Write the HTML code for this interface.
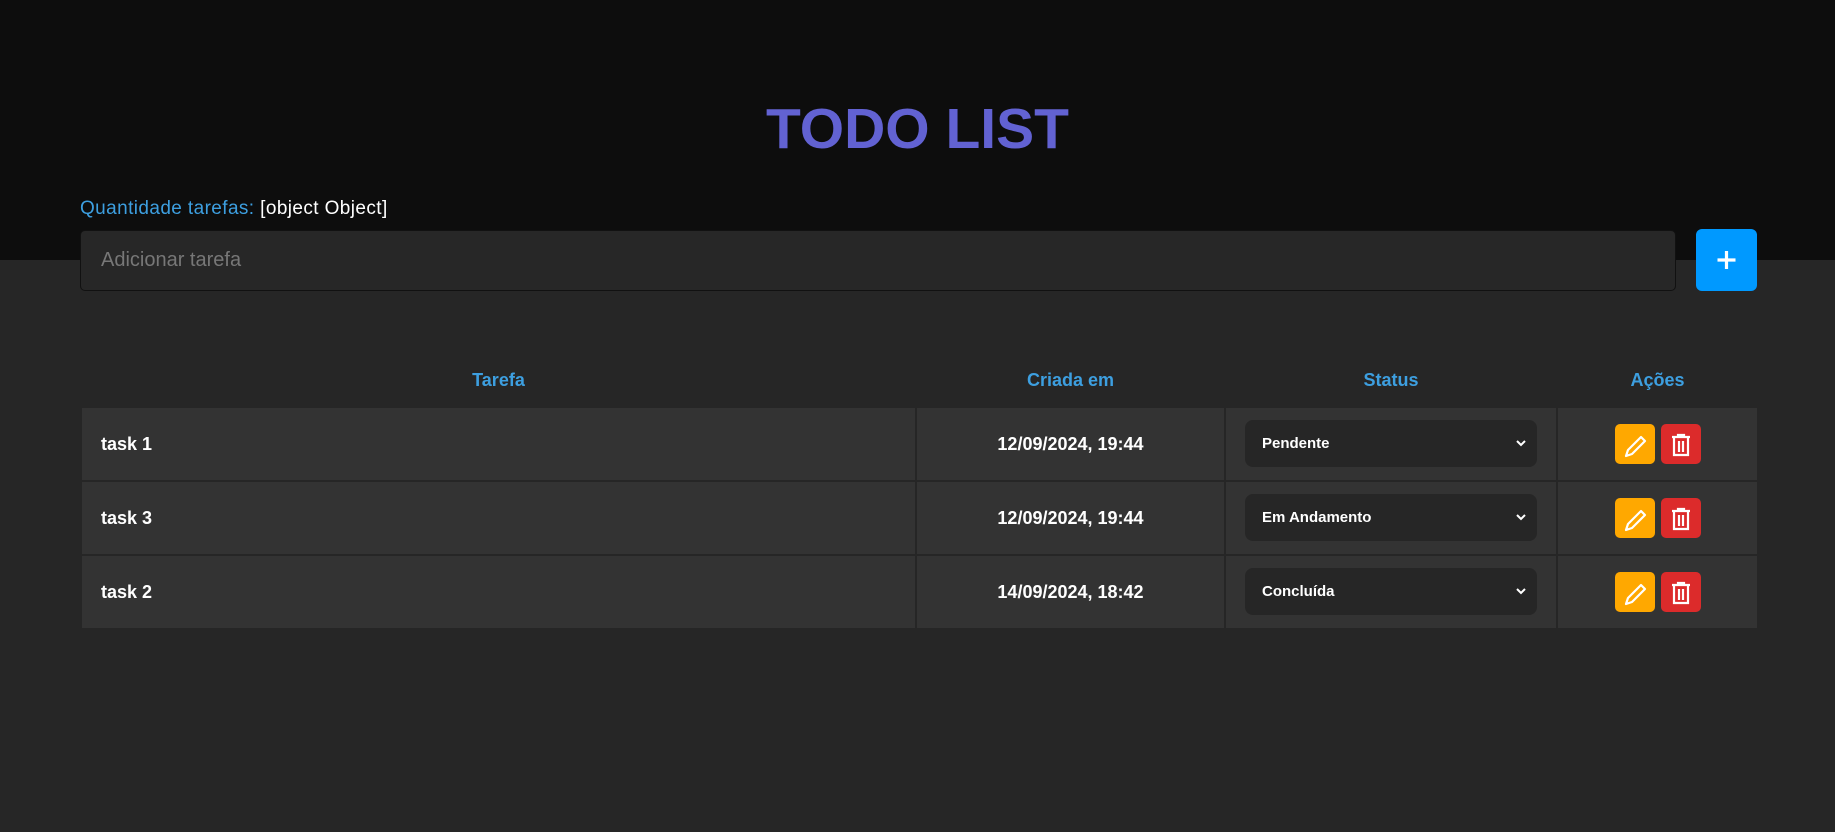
<!DOCTYPE html>
<html><head><meta charset="utf-8"><style>
*{box-sizing:border-box;margin:0;padding:0}
body{width:1835px;height:832px;background:#262626;font-family:"Liberation Sans",sans-serif;position:relative;overflow:hidden}
.hdr{position:absolute;left:0;top:0;width:1835px;height:260px;background:#0d0d0d}
h1{position:absolute;left:0;width:1835px;top:96px;text-align:center;font-size:57px;line-height:66px;color:#6262d2;font-weight:bold;letter-spacing:0px}
.q{position:absolute;left:80px;top:198px;font-size:19px;color:#3d9fe0;letter-spacing:0.4px}
.q span{color:#fff}
.inp{position:absolute;left:80px;top:230px;width:1596px;height:61px;background:#272727;border:1px solid #111;border-radius:5px;color:#777;font-size:20px;padding:18px 0 0 20px}
.add{position:absolute;left:1696px;top:229px;width:61px;height:62px;background:#0099ff;border-radius:6px}
.th{position:absolute;top:370px;font-size:18px;font-weight:bold;color:#3d9fe0;text-align:center}
.row{position:absolute;left:82px;width:1675px;height:72px}
.c{position:absolute;top:0;height:72px;background:#333;color:#fff;font-weight:bold;font-size:18px;line-height:72px}
.sel{position:absolute;left:19px;top:12px;width:292px;height:47px;background:#262626;border-radius:8px;font-size:15px;line-height:47px;padding-left:17px;font-weight:bold}
.sel svg{position:absolute;right:10px;top:19px}
.b{position:absolute;top:16px;width:40px;height:40px;border-radius:5px}
</style></head><body>
<div class="hdr"></div>
<h1>TODO LIST</h1>
<div class="q">Quantidade tarefas: <span>[object Object]</span></div>
<div class="inp">Adicionar tarefa</div>
<div class="add"><svg width="61" height="62" viewBox="0 0 61 62"><path d="M30.5 22v18M21.5 31h18" stroke="#fff" stroke-width="3.2"/></svg></div>
<div class="th" style="left:82px;width:833px">Tarefa</div>
<div class="th" style="left:917px;width:307px">Criada em</div>
<div class="th" style="left:1226px;width:330px">Status</div>
<div class="th" style="left:1558px;width:199px">Ações</div>

<div class="row" style="top:408px">
<div class="c" style="left:0;width:833px;padding-left:19px">task 1</div>
<div class="c" style="left:835px;width:307px;text-align:center">12/09/2024, 19:44</div>
<div class="c" style="left:1144px;width:330px"><div class="sel">Pendente<svg width="12" height="8" viewBox="0 0 12 8"><path d="M2 2l4 4 4-4" stroke="#fff" stroke-width="2" fill="none"/></svg></div></div>
<div class="c" style="left:1476px;width:199px">
<div class="b" style="left:57px;background:#ffa800"><svg width="40" height="40" viewBox="0 0 40 40"><path d="M11 30l2-6 13-13 4 4-13 13z" stroke="#fff" stroke-width="2.2" fill="none" stroke-linejoin="round"/></svg></div>
<div class="b" style="left:103px;background:#dc2b2b"><svg width="40" height="40" viewBox="0 0 40 40"><path d="M11 11h18M17 10v-1h6v1M13 12v17h14v-17M18 15v11M22 15v11" stroke="#fff" stroke-width="2.2" fill="none"/></svg></div>
</div></div>

<div class="row" style="top:482px">
<div class="c" style="left:0;width:833px;padding-left:19px">task 3</div>
<div class="c" style="left:835px;width:307px;text-align:center">12/09/2024, 19:44</div>
<div class="c" style="left:1144px;width:330px"><div class="sel">Em Andamento<svg width="12" height="8" viewBox="0 0 12 8"><path d="M2 2l4 4 4-4" stroke="#fff" stroke-width="2" fill="none"/></svg></div></div>
<div class="c" style="left:1476px;width:199px">
<div class="b" style="left:57px;background:#ffa800"><svg width="40" height="40" viewBox="0 0 40 40"><path d="M11 30l2-6 13-13 4 4-13 13z" stroke="#fff" stroke-width="2.2" fill="none" stroke-linejoin="round"/></svg></div>
<div class="b" style="left:103px;background:#dc2b2b"><svg width="40" height="40" viewBox="0 0 40 40"><path d="M11 11h18M17 10v-1h6v1M13 12v17h14v-17M18 15v11M22 15v11" stroke="#fff" stroke-width="2.2" fill="none"/></svg></div>
</div></div>

<div class="row" style="top:556px">
<div class="c" style="left:0;width:833px;padding-left:19px">task 2</div>
<div class="c" style="left:835px;width:307px;text-align:center">14/09/2024, 18:42</div>
<div class="c" style="left:1144px;width:330px"><div class="sel">Concluída<svg width="12" height="8" viewBox="0 0 12 8"><path d="M2 2l4 4 4-4" stroke="#fff" stroke-width="2" fill="none"/></svg></div></div>
<div class="c" style="left:1476px;width:199px">
<div class="b" style="left:57px;background:#ffa800"><svg width="40" height="40" viewBox="0 0 40 40"><path d="M11 30l2-6 13-13 4 4-13 13z" stroke="#fff" stroke-width="2.2" fill="none" stroke-linejoin="round"/></svg></div>
<div class="b" style="left:103px;background:#dc2b2b"><svg width="40" height="40" viewBox="0 0 40 40"><path d="M11 11h18M17 10v-1h6v1M13 12v17h14v-17M18 15v11M22 15v11" stroke="#fff" stroke-width="2.2" fill="none"/></svg></div>
</div></div>
</body></html>
